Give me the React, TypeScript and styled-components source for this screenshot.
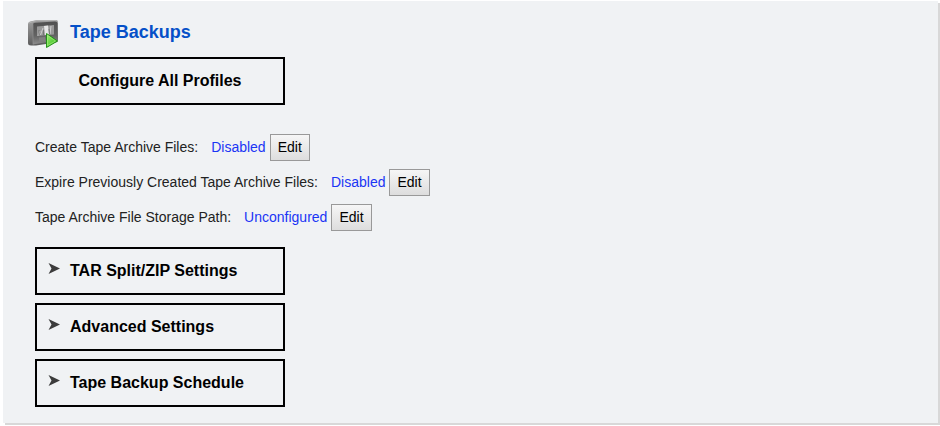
import React from "react";
import styled, { createGlobalStyle } from "styled-components";

const GlobalStyle = createGlobalStyle`
  *, *::before, *::after {
    box-sizing: border-box;
  }
  body {
    margin: 0;
    background: #ffffff;
    color: #222222;
    font-family: "Liberation Sans", Arial, sans-serif;
    font-size: 14px;
  }
`;

const Panel = styled.main`
  margin: 1px 2px 3px 3px;
  padding: 16px 24px 16px;
  background: #f0f2f4;
  box-shadow: 2px 2px 0 #d8d8d8;
`;

const Header = styled.header`
  display: flex;
  align-items: center;
  gap: 10px;
  height: 32px;
`;

const Title = styled.h1`
  margin: 0 0 2px;
  color: #0550c8;
  font-size: 18px;
  line-height: 24px;
`;

const Content = styled.div`
  display: flex;
  flex-direction: column;
  align-items: flex-start;
  margin-top: 8px;
  padding-left: 8px;
`;

const BoxButton = styled.button<{ $centered?: boolean }>`
  display: flex;
  align-items: center;
  justify-content: ${(p) => (p.$centered ? "center" : "flex-start")};
  gap: 10px;
  width: 250px;
  max-width: 100%;
  height: 48px;
  padding: 0 11px;
  border: 2px solid #000000;
  background: transparent;
  color: #000000;
  font: bold 16px/20px "Liberation Sans", Arial, sans-serif;
  cursor: pointer;
`;

const Arrow = styled.svg`
  flex: none;
  margin-bottom: 4px;
`;

const Settings = styled.section`
  display: flex;
  flex-direction: column;
  gap: 8px;
  margin: 29px 0 16px;
`;

const SettingRow = styled.div`
  display: flex;
  align-items: baseline;
  line-height: 20px;
`;

const Label = styled.span`
  margin-right: 13px;
`;

const Value = styled.span`
  margin-right: 4px;
  color: #1a35f5;
`;

const EditButton = styled.button`
  height: 27px;
  padding: 0 7px 2px;
  border: 1px solid #999999;
  border-radius: 0;
  background: linear-gradient(#f6f6f6, #dddddd);
  color: #000000;
  font: 14px/20px "Liberation Sans", Arial, sans-serif;
  cursor: pointer;
`;

const Sections = styled.section`
  display: flex;
  flex-direction: column;
  gap: 8px;
  max-width: 100%;
`;

const TapeIcon = () => (
  <svg width="33" height="32" viewBox="0 0 33 32" aria-hidden="true">
    <defs>
      <linearGradient id="side" x1="0" y1="0" x2="0" y2="1">
        <stop offset="0" stopColor="#a0a0a0" />
        <stop offset="1" stopColor="#5c5c5c" />
      </linearGradient>
      <linearGradient id="face" x1="0" y1="0" x2="0" y2="1">
        <stop offset="0" stopColor="#505050" />
        <stop offset="0.6" stopColor="#626262" />
        <stop offset="1" stopColor="#8c8c8c" />
      </linearGradient>
      <linearGradient id="play" x1="0" y1="0" x2="1" y2="1">
        <stop offset="0" stopColor="#a0f070" />
        <stop offset="1" stopColor="#28b414" />
      </linearGradient>
    </defs>
    <path d="M1 7Q1 5 3 4.500L10 3H29Q31 3 31 5V23Q31 25 29 25.500L9 28.500L4 28.500Q1 28.500 1 26Z" fill="url(#side)" />
    <path d="M6 7.500Q6 6 8 5.800L28 4.500Q30.500 4.500 30.500 6.500V23L6 27.500Z" fill="url(#face)" />
    <path d="M2 6L10 3.500L29 3.500" fill="none" stroke="#b5b5b5" strokeWidth="0.800" />
    <path d="M6 7.500V27.500" stroke="#8f8f8f" strokeWidth="0.700" fill="none" />
    <path d="M10 9.500L27 8V17.500L10 19Z" fill="#999999" />
    <path d="M17 9L21 8.600L22 17.500L18 18Z" fill="#e6e6e6" />
    <path d="M13 14L11 18.500M16 11L13.500 18M24 9L23 17" stroke="#cdcdcd" fill="none" />
    <path d="M12 13V18M16.500 13V18M22 12L22.500 17" stroke="#777777" fill="none" />
    <path d="M12 20.500L18 20V24L12 25Z" fill="#818181" />
    <path d="M19.500 16.500V30.500L30.500 24Z" fill="url(#play)" stroke="#259019" strokeLinejoin="round" />
    <path d="M20.500 18.500V28.500L28.500 24Z" fill="none" stroke="#a9ef83" strokeOpacity="0.6" />
  </svg>
);

const ArrowIcon = () => (
  <Arrow width="12" height="12" viewBox="0 0 12 12" aria-hidden="true">
    <path d="M0.500 0L12 5.500L0.500 11L3.500 5.500Z" fill="#3c3c3c" />
  </Arrow>
);

const settings = [
  { id: "create", label: "Create Tape Archive Files:", value: "Disabled" },
  { id: "expire", label: "Expire Previously Created Tape Archive Files:", value: "Disabled" },
  { id: "path", label: "Tape Archive File Storage Path:", value: "Unconfigured" },
];

const sections = ["TAR Split/ZIP Settings", "Advanced Settings", "Tape Backup Schedule"];

export default function App() {
  return (
    <>
      <GlobalStyle />
      <Panel>
        <Header>
          <TapeIcon />
          <Title>Tape Backups</Title>
        </Header>
        <Content>
          <BoxButton type="button" $centered>
            Configure All Profiles
          </BoxButton>
          <Settings>
            {settings.map((s) => (
              <SettingRow key={s.id}>
                <Label id={s.id}>{s.label}</Label>
                <Value>{s.value}</Value>
                <EditButton type="button" aria-describedby={s.id}>
                  Edit
                </EditButton>
              </SettingRow>
            ))}
          </Settings>
          <Sections>
            {sections.map((name) => (
              <BoxButton key={name} type="button" aria-expanded={false}>
                <ArrowIcon />
                {name}
              </BoxButton>
            ))}
          </Sections>
        </Content>
      </Panel>
    </>
  );
}
